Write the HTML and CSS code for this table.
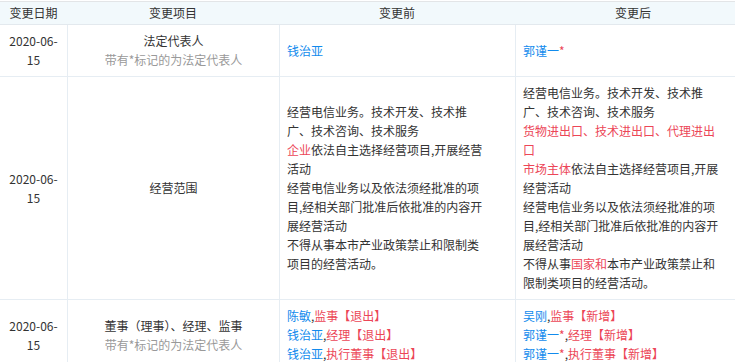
FILE: index.html
```html
<!DOCTYPE html>
<html lang="zh-CN">
<head>
<meta charset="utf-8">
<title>变更记录</title>
<link rel="stylesheet" href="styles.css">
</head>
<body>
<div class="table">
  <div class="row head">
    <div class="hcell">变更日期</div>
    <div class="hcell">变更项目</div>
    <div class="hcell">变更前</div>
    <div class="hcell">变更后</div>
  </div>

  <div class="row">
    <div class="cell center">2020-06-<wbr>15</div>
    <div class="cell center">
      <div>法定代表人</div>
      <div class="muted">带有*标记的为法定代表人</div>
    </div>
    <div class="cell"><div><span class="blue">钱治亚</span></div></div>
    <div class="cell"><div><span class="blue">郭谨一</span><span class="red">*</span></div></div>
  </div>

  <div class="row">
    <div class="cell center">2020-06-<wbr>15</div>
    <div class="cell center">经营范围</div>
    <div class="cell">
      <div>经营电信业务。技术开发、技术推广、技术咨询、技术服务</div>
      <div><span class="red">企业</span>依法自主选择经营项目,开展经营活动</div>
      <div>经营电信业务以及依法须经批准的项目,经相关部门批准后依批准的内容开展经营活动</div>
      <div>不得从事本市产业政策禁止和限制类项目的经营活动。</div>
    </div>
    <div class="cell">
      <div>经营电信业务。技术开发、技术推广、技术咨询、技术服务</div>
      <div class="red">货物进出口、技术进出口、代理进出口</div>
      <div><span class="red">市场主体</span>依法自主选择经营项目,开展经营活动</div>
      <div>经营电信业务以及依法须经批准的项目,经相关部门批准后依批准的内容开展经营活动</div>
      <div>不得从事<span class="red">国家和</span>本市产业政策禁止和限制类项目的经营活动。</div>
    </div>
  </div>

  <div class="row">
    <div class="cell center">2020-06-<wbr>15</div>
    <div class="cell center">
      <div>董事（理事）、经理、监事</div>
      <div class="muted">带有*标记的为法定代表人</div>
    </div>
    <div class="cell">
      <div><span class="blue">陈敏</span>,<span class="red">监事【退出】</span></div>
      <div><span class="blue">钱治亚</span>,<span class="red">经理【退出】</span></div>
      <div><span class="blue">钱治亚</span>,<span class="red">执行董事【退出】</span></div>
    </div>
    <div class="cell">
      <div><span class="blue">吴刚</span>,<span class="red">监事【新增】</span></div>
      <div><span class="blue">郭谨一</span><span class="red">*</span>,<span class="red">经理【新增】</span></div>
      <div><span class="blue">郭谨一</span><span class="red">*</span>,<span class="red">执行董事【新增】</span></div>
    </div>
  </div>
</div>
</body>
</html>
```

FILE: styles.css
```css
html, body {
  margin: 0;
  padding: 0;
  overflow: hidden;
  background: #fff;
}

body {
  font-family: "Microsoft YaHei", "Noto Sans CJK SC", sans-serif;
  font-size: 12px;
  line-height: 19px;
  color: #333;
}

.table {
  width: 751px;
  margin-top: 1px;
}

.row {
  display: grid;
  grid-template-columns: 67px 212px 236px 236px;
  border-bottom: 1px solid #e6edf3;
}

.head {
  background: #f2f9fc;
  border-top: 1px solid #e3e5e7;
  border-bottom: 1px solid #e3e9ee;
}

.hcell {
  line-height: 22px;
  text-align: center;
  color: #333;
}

.cell {
  display: flex;
  flex-direction: column;
  justify-content: center;
  padding: 6px 28px 7px 7px;
}

.cell + .cell {
  border-left: 1px solid #e6edf3;
}

.cell.center {
  align-items: center;
  text-align: center;
  padding: 6px 7px 7px;
}

.muted {
  color: #999;
}

.blue {
  color: #128bed;
}

.red {
  color: #ec4657;
}
```
